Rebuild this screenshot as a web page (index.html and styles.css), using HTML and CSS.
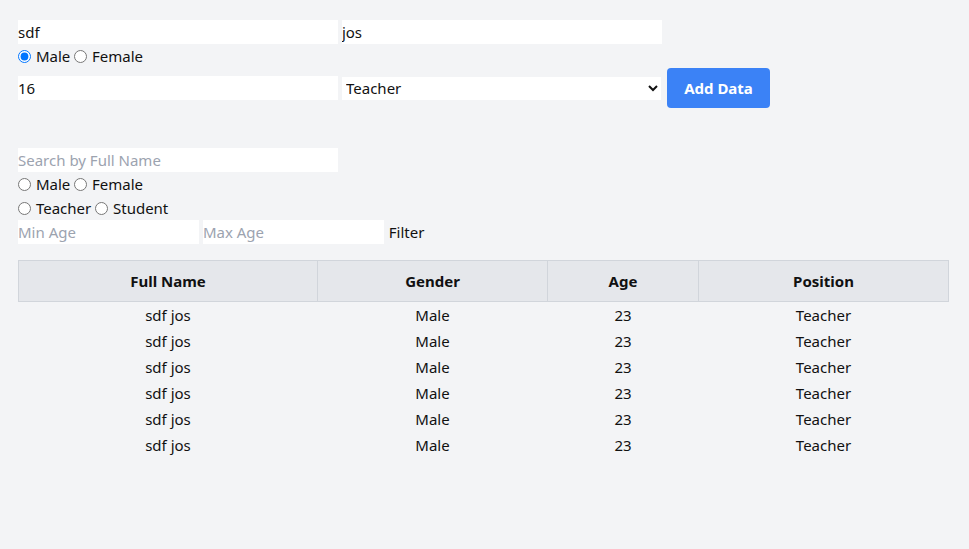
FILE: index.html
```html
<!DOCTYPE html>
<html>
<head>
<meta charset="utf-8">
<link rel="stylesheet" href="styles.css">
</head>
<body>
<div class="app">
  <form class="add-form">
    <div class="line">
      <input class="field" type="text" value="sdf"> <input class="field" type="text" value="jos">
    </div>
    <div class="line">
      <input type="radio" name="g1" checked> Male <input type="radio" name="g1"> Female
    </div>
    <div class="line row">
      <input class="field" type="text" value="16">
      <select class="select">
        <option>Teacher</option>
        <option>Student</option>
      </select>
      <button type="button" class="btn">Add Data</button>
    </div>
  </form>

  <div class="filters">
    <div class="line">
      <input class="field" type="text" placeholder="Search by Full Name">
    </div>
    <div class="line">
      <input type="radio" name="g2"> Male <input type="radio" name="g2"> Female
    </div>
    <div class="line">
      <input type="radio" name="p2"> Teacher <input type="radio" name="p2"> Student
    </div>
    <div class="line">
      <input class="field small" type="text" placeholder="Min Age"> <input class="field small" type="text" placeholder="Max Age"> <span class="filter">Filter</span>
    </div>
  </div>

  <table class="table">
    <thead>
      <tr><th class="c1">Full Name</th><th class="c2">Gender</th><th class="c3">Age</th><th class="c4">Position</th></tr>
    </thead>
    <tbody>
      <tr><td>sdf jos</td><td>Male</td><td>23</td><td>Teacher</td></tr>
      <tr><td>sdf jos</td><td>Male</td><td>23</td><td>Teacher</td></tr>
      <tr><td>sdf jos</td><td>Male</td><td>23</td><td>Teacher</td></tr>
      <tr><td>sdf jos</td><td>Male</td><td>23</td><td>Teacher</td></tr>
      <tr><td>sdf jos</td><td>Male</td><td>23</td><td>Teacher</td></tr>
      <tr><td>sdf jos</td><td>Male</td><td>23</td><td>Teacher</td></tr>
    </tbody>
  </table>
</div>
</body>
</html>
```

FILE: styles.css
```css
* { box-sizing: border-box; }
html, body { margin: 0; padding: 0; }
body {
  background: #f3f4f6;
  color: #111;
  font-family: "Noto Sans", "Open Sans", sans-serif;
  font-size: 15px;
  line-height: 24px;
}
.app { padding: 20px 20px 0 18px; }
.line { line-height: 24px; height: 24px; white-space: nowrap; }
.field {
  font: inherit;
  color: #111;
  width: 320px;
  height: 24px;
  border: none;
  padding: 0;
  margin: 0;
  background: #fff;
  outline: none;
  vertical-align: top;
}
.field::placeholder { color: #9ca3af; }
.field.small { width: 181px; }
input[type=radio] {
  margin: 0 1px 0 0;
  width: 13px;
  height: 13px;
  vertical-align: -1px;
}
.row {
  height: 40px;
  display: flex;
  align-items: center;
  gap: 4px;
}
.select {
  font: inherit;
  color: #111;
  width: 319px;
  height: 23px;
  border: none;
  background: #fff;
  margin: 0;
  padding: 0;
}
.btn {
  margin-left: 2px;
  font: inherit;
  font-weight: 700;
  color: #fff;
  background: #3b82f6;
  border: none;
  border-radius: 4px;
  height: 40px;
  padding: 0 16px;
  width: 103px;
}
.filters { margin-top: 40px; }
.filter { margin-left: 1px; }
.table {
  margin-top: 16px;
  width: 931px;
  border-collapse: collapse;
}
.table th {
  background: #e5e7eb;
  border: 1px solid #d1d5db;
  font-weight: 700;
  height: 41px;
  padding: 0;
  text-align: center;
}
.c1 { width: 299px; }
.c2 { width: 230px; }
.c3 { width: 151px; }
.table td {
  text-align: center;
  height: 26px;
  padding: 0;
}
```
